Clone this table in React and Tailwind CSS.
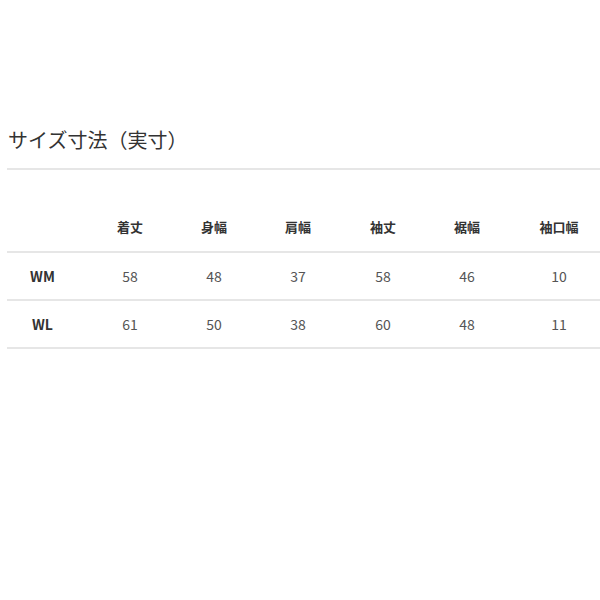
const cols = ['着丈', '身幅', '肩幅', '袖丈', '裾幅', '袖口幅']

const rows = [
  { size: 'WM', values: [58, 48, 37, 58, 46, 10] },
  { size: 'WL', values: [61, 50, 38, 60, 48, 11] },
]

// column widths chosen so each label sits centred where the reference has it
const grid = 'grid grid-cols-[71px_104px_64px_104px_66px_102px_82px] items-center'

export default function App() {
  return (
    <div
      className="w-[600px] h-[600px] bg-white pl-[7px] pt-[126px]"
      style={{ fontFamily: '"Noto Sans CJK JP", "Noto Sans", sans-serif' }}
    >
      <h2 className="text-[20px] leading-[28px] text-[#333] pl-[1px] pb-[14px]">サイズ寸法（実寸）</h2>
      <div className="h-[2px] bg-[#e6e6e6]" />

      <div className="mt-[33px]">
        <div className={`${grid} h-[48px] text-[13px] font-bold text-[#333]`}>
          <div />
          {cols.map((c) => (
            <div key={c} className="text-center">{c}</div>
          ))}
        </div>
        <div className="h-[2px] bg-[#e6e6e6]" />
        {rows.map((r) => (
          <div key={r.size}>
            <div className={`${grid} h-[46px]`}>
              <div className="text-center text-[14px] font-bold text-[#333]">{r.size}</div>
              {r.values.map((v, i) => (
                <div key={i} className="text-center text-[14px] text-[#555]">{v}</div>
              ))}
            </div>
            <div className="h-[2px] bg-[#e6e6e6]" />
          </div>
        ))}
      </div>
    </div>
  )
}
